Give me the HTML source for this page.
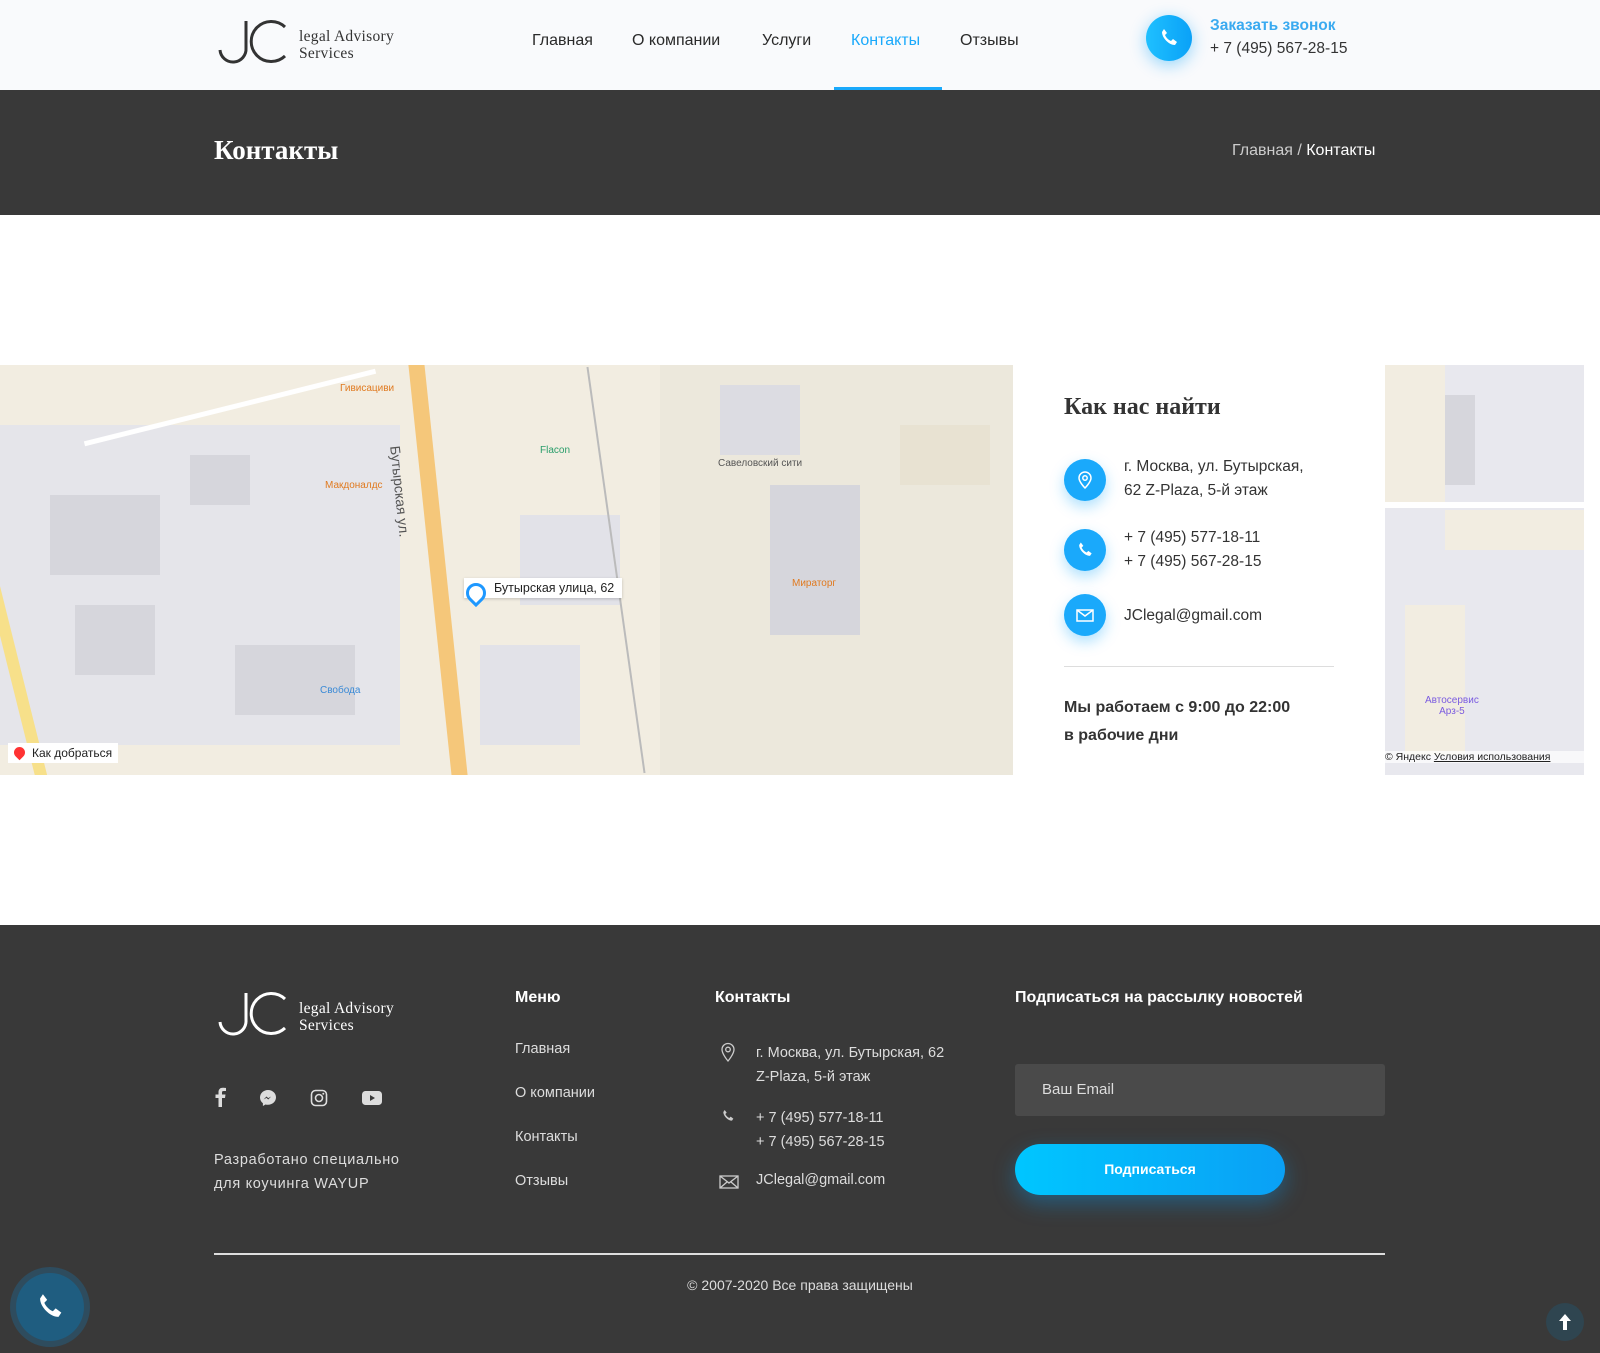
<!DOCTYPE html>
<html><head><meta charset="utf-8">
<style>
*{margin:0;padding:0;box-sizing:border-box}
body{width:1600px;height:1353px;position:relative;overflow:hidden;background:#fff;font-family:"Liberation Sans",sans-serif;color:#333}
.abs{position:absolute}
header{position:absolute;left:0;top:0;width:1600px;height:90px;background:#f9fafc}
.logo{position:absolute;width:220px;height:50px}
.logo svg{position:absolute;left:0;top:0}
.logo .t{position:absolute;left:83px;top:10px;font-family:"Liberation Serif",serif;font-size:15.5px;line-height:17px;letter-spacing:.3px;white-space:nowrap}
nav a{position:absolute;top:32px;font-size:16px;color:#2a2a2a;text-decoration:none}
.band{position:absolute;left:0;top:90px;width:1600px;height:125px;background:#393939}
.map{position:absolute;background:#f2ede1;overflow:hidden}
.map div{position:absolute}
.ic{position:absolute;width:42px;height:42px;border-radius:50%;background:#1aa9fb;box-shadow:0 6px 14px rgba(26,169,251,.35)}
.ic svg{position:absolute;left:11px;top:11px}
.info{position:absolute;font-size:15.5px;line-height:24px;color:#333;white-space:nowrap}
footer{position:absolute;left:0;top:925px;width:1600px;height:428px;background:#393939;color:#ddd}
footer .h{position:absolute;top:64px;font-size:16px;font-weight:bold;color:#fff}
footer .m{position:absolute;font-size:14.5px;color:#ddd;white-space:nowrap}
footer svg.s{position:absolute}
</style></head><body>
<header>
 <div class="logo" style="left:216px;top:18px;color:#333">
  <svg width="72" height="46" viewBox="0 0 72 46"><path d="M30 3V30A13 13 0 0 1 4 32" fill="none" stroke="#333" stroke-width="3"/><path d="M69 9A20 20 0 1 0 69 38" fill="none" stroke="#333" stroke-width="3"/></svg>
  <div class="t">legal Advisory<br>Services</div>
 </div>
 <nav>
  <a style="left:532px">Главная</a>
  <a style="left:632px">О компании</a>
  <a style="left:762px">Услуги</a>
  <a style="left:851px;color:#1aa9fb">Контакты</a>
  <a style="left:960px">Отзывы</a>
 </nav>
 <div class="abs" style="left:834px;top:87px;width:108px;height:3px;background:#1aa9fb"></div>
 <div class="ic" style="left:1146px;top:15px;width:46px;height:46px;background:linear-gradient(90deg,#1fc0ff,#0aa1f7);box-shadow:0 4px 16px rgba(26,169,251,.45)"><svg width="24" height="24" viewBox="0 0 24 24"><path d="M7 3l3 4-2 2c1 2.5 3.5 5 6 6l2-2 4 3-2 3c-6 0-13-7-13-13z" fill="#fff"/></svg></div>
 <div class="abs" style="left:1210px;top:17px;font-size:15.5px;font-weight:bold;color:#3aaaf0">Заказать звонок</div>
 <div class="abs" style="left:1210px;top:40px;font-size:15.5px;color:#333">+ 7 (495) 567-28-15</div>
</header>
<div class="band">
 <div class="abs" style="left:214px;top:45px;font-family:'Liberation Serif',serif;font-size:27px;font-weight:bold;color:#fff">Контакты</div>
 <div class="abs" style="left:1232px;top:52px;font-size:16px;color:#ccc">Главная / <span style="color:#fff">Контакты</span></div>
</div>

<div class="map" style="left:0;top:365px;width:1013px;height:410px">
 <div style="left:0;top:60px;width:400px;height:320px;background:#e5e5ea"></div>
 <div style="left:50px;top:130px;width:110px;height:80px;background:#d6d6dc"></div>
 <div style="left:75px;top:240px;width:80px;height:70px;background:#d6d6dc"></div>
 <div style="left:190px;top:90px;width:60px;height:50px;background:#d6d6dc"></div>
 <div style="left:235px;top:280px;width:120px;height:70px;background:#d6d6dc"></div>
 <div style="left:520px;top:150px;width:100px;height:90px;background:#e2e2e8"></div>
 <div style="left:480px;top:280px;width:100px;height:100px;background:#e2e2e8"></div>
 <div style="left:660px;top:0;width:353px;height:410px;background:#ece8dc"></div>
 <div style="left:720px;top:20px;width:80px;height:70px;background:#dcdce2"></div>
 <div style="left:770px;top:120px;width:90px;height:150px;background:#d6d6dc"></div>
 <div style="left:900px;top:60px;width:90px;height:60px;background:#e8e2d2"></div>
 <div style="left:430px;top:-20px;width:16px;height:450px;background:#f5c77a;transform:rotate(-6deg)"></div>
 <div style="left:0;top:120px;width:12px;height:300px;background:#f7e08a;transform:rotate(-14deg)"></div>
 <div style="left:80px;top:40px;width:300px;height:5px;background:#fff;transform:rotate(-14deg)"></div>
 <div style="left:615px;top:0;width:2px;height:410px;background:#bbb;transform:rotate(-8deg)"></div>
 <div style="left:464px;top:213px;background:#fff;padding:3px 8px 3px 30px;font-size:12.5px;color:#222;box-shadow:0 1px 3px rgba(0,0,0,.2)">Бутырская улица, 62</div>
 <div style="left:466px;top:218px;width:20px;height:20px;border:3px solid #1e98ff;border-radius:50% 50% 50% 0;transform:rotate(-45deg);background:#fff"></div>
 <div style="left:8px;top:378px;background:#fff;padding:3px 6px 3px 24px;font-size:12px;color:#222">Как добраться</div>
 <div style="left:14px;top:382px;width:11px;height:11px;background:#f33;border-radius:50% 50% 50% 0;transform:rotate(-45deg)"></div>
 <div style="left:403px;top:80px;font-size:14px;color:#555;transform:rotate(84deg);transform-origin:left top">Бутырская ул.</div>
 <div style="left:325px;top:115px;font-size:10px;color:#e07a20">Макдоналдс</div>
 <div style="left:340px;top:18px;font-size:10px;color:#e07a20">Гивисациви</div>
 <div style="left:540px;top:80px;font-size:10px;color:#2a9d6a">Flacon</div>
 <div style="left:718px;top:93px;font-size:10px;color:#555">Савеловский сити</div>
 <div style="left:792px;top:213px;font-size:10px;color:#e07a20">Мираторг</div>
 <div style="left:320px;top:320px;font-size:10px;color:#3a8ad6">Свобода</div>
</div>

<div class="info" style="left:1064px;top:395px;font-family:'Liberation Serif',serif;font-size:24px;font-weight:bold;color:#333">Как нас найти</div>
<div class="ic" style="left:1064px;top:459px"><svg width="20" height="20" viewBox="0 0 20 20"><path d="M10 18s-6-6-6-10a6 6 0 0112 0c0 4-6 10-6 10z" fill="none" stroke="#fff" stroke-width="1.5"/><circle cx="10" cy="8" r="2.2" fill="none" stroke="#fff" stroke-width="1.5"/></svg></div>
<div class="info" style="left:1124px;top:455px">г. Москва, ул. Бутырская,<br>62 Z-Plaza, 5-й этаж</div>
<div class="ic" style="left:1064px;top:529px"><svg width="20" height="20" viewBox="0 0 24 24"><path d="M7 3l3 4-2 2c1 2.5 3.5 5 6 6l2-2 4 3-2 3c-6 0-13-7-13-13z" fill="#fff"/></svg></div>
<div class="info" style="left:1124px;top:526px">+ 7 (495) 577-18-11<br>+ 7 (495) 567-28-15</div>
<div class="ic" style="left:1064px;top:594px"><svg width="20" height="20" viewBox="0 0 20 20"><rect x="2" y="5" width="16" height="11" fill="none" stroke="#fff" stroke-width="1.5"/><path d="M2 5l8 6 8-6" fill="none" stroke="#fff" stroke-width="1.5"/></svg></div>
<div class="info" style="left:1124px;top:604px">JClegal@gmail.com</div>
<div class="abs" style="left:1064px;top:666px;width:270px;height:1px;background:#ddd"></div>
<div class="info" style="left:1064px;top:694px;font-weight:bold;font-size:16px;line-height:28px;color:#333">Мы работаем с 9:00 до 22:00<br>в рабочие дни</div>

<div class="map" style="left:1385px;top:365px;width:199px;height:410px;background:#e8e8ee">
 <div style="left:0;top:0;width:60px;height:140px;background:#f2ede1"></div>
 <div style="left:60px;top:145px;width:139px;height:40px;background:#f2ede1"></div>
 <div style="left:0;top:137px;width:199px;height:6px;background:#fff"></div>
 <div style="left:20px;top:240px;width:60px;height:150px;background:#f2ede1"></div>
 <div style="left:60px;top:30px;width:30px;height:90px;background:#d6d6dc"></div>
 <div style="left:40px;top:330px;font-size:10px;color:#7a5be0;text-align:center;line-height:11px">Автосервис<br>Арз-5</div>
 <div style="left:0;top:386px;width:199px;font-size:10.5px;color:#222;background:rgba(255,255,255,.7);white-space:nowrap">© Яндекс <u>Условия использования</u></div>
</div>

<footer>
 <div class="logo" style="left:216px;top:65px;color:#fff">
  <svg width="72" height="46" viewBox="0 0 72 46"><path d="M30 3V30A13 13 0 0 1 4 32" fill="none" stroke="#fff" stroke-width="3"/><path d="M69 9A20 20 0 1 0 69 38" fill="none" stroke="#fff" stroke-width="3"/></svg>
  <div class="t">legal Advisory<br>Services</div>
 </div>
 <svg class="s" style="left:214px;top:162px" width="12" height="20" viewBox="0 0 12 20"><path d="M8 20V11h3l.5-3.5H8V5.5C8 4.5 8.3 4 9.7 4H12V1C11.5 1 10 .8 8.8.8 6 .8 4.5 2.5 4.5 5.2v2.3H1.5V11h3v9z" fill="#ddd"/></svg>
 <svg class="s" style="left:259px;top:164px" width="18" height="18" viewBox="0 0 18 18"><path d="M9 1C4.6 1 1 4.3 1 8.5c0 2.3 1.1 4.4 2.9 5.8V17l2.6-1.5c.8.2 1.6.3 2.5.3 4.4 0 8-3.3 8-7.5S13.4 1 9 1z" fill="#ddd"/><path d="M4.5 10.5l3-3 1.7 1.6 3-1.6-3 3-1.7-1.6z" fill="#393939"/></svg>
 <svg class="s" style="left:310px;top:164px" width="18" height="18" viewBox="0 0 18 18"><rect x="1.5" y="1.5" width="15" height="15" rx="4" fill="none" stroke="#ddd" stroke-width="1.6"/><circle cx="9" cy="9" r="3.5" fill="none" stroke="#ddd" stroke-width="1.6"/><circle cx="13.3" cy="4.7" r="1" fill="#ddd"/></svg>
 <svg class="s" style="left:362px;top:166px" width="20" height="14" viewBox="0 0 20 14"><rect width="20" height="14" rx="3.5" fill="#ddd"/><path d="M8 4v6l5-3z" fill="#393939"/></svg>
 <div class="m" style="left:214px;top:223px;line-height:24px;letter-spacing:.7px">Разработано специально<br>для коучинга WAYUP</div>
 <div class="h" style="left:515px">Меню</div>
 <div class="m" style="left:515px;top:116px">Главная</div>
 <div class="m" style="left:515px;top:160px">О компании</div>
 <div class="m" style="left:515px;top:204px">Контакты</div>
 <div class="m" style="left:515px;top:248px">Отзывы</div>
 <div class="h" style="left:715px">Контакты</div>
 <svg class="s" style="left:720px;top:116px" width="16" height="22" viewBox="0 0 16 22"><path d="M8 20s-6-7-6-11.5a6 6 0 0112 0C14 13 8 20 8 20z" fill="none" stroke="#ccc" stroke-width="1.3"/><circle cx="8" cy="8.5" r="2.3" fill="none" stroke="#ccc" stroke-width="1.3"/></svg>
 <div class="m" style="left:756px;top:116px;line-height:24px">г. Москва, ул. Бутырская, 62<br>Z-Plaza, 5-й этаж</div>
 <svg class="s" style="left:720px;top:182px" width="16" height="18" viewBox="0 0 24 24"><path d="M7 3l3 4-2 2c1 2.5 3.5 5 6 6l2-2 4 3-2 3c-6 0-13-7-13-13z" fill="#ccc"/></svg>
 <div class="m" style="left:756px;top:181px;line-height:24px">+ 7 (495) 577-18-11<br>+ 7 (495) 567-28-15</div>
 <svg class="s" style="left:719px;top:249px" width="20" height="16" viewBox="0 0 20 16"><rect x="1" y="2" width="18" height="12" fill="none" stroke="#ccc" stroke-width="1.3"/><path d="M1 2l9 7 9-7M1 14l7-6M19 14l-7-6" fill="none" stroke="#ccc" stroke-width="1.3"/></svg>
 <div class="m" style="left:756px;top:247px">JClegal@gmail.com</div>
 <div class="h" style="left:1015px">Подписаться на рассылку новостей</div>
 <div class="abs" style="left:1015px;top:139px;width:370px;height:52px;background:#4a4a4a;border-radius:3px;padding:17px 27px;font-size:15px;color:#ddd">Ваш Email</div>
 <div class="abs" style="left:1015px;top:219px;width:270px;height:51px;border-radius:26px;background:linear-gradient(90deg,#00c6ff,#0aa0f5);box-shadow:0 8px 22px rgba(0,160,255,.35);color:#fff;font-weight:bold;font-size:14px;text-align:center;line-height:51px">Подписаться</div>
 <div class="abs" style="left:214px;top:328px;width:1171px;height:2px;background:#ddd"></div>
 <div class="m" style="left:0;width:1600px;text-align:center;top:352px;font-size:14px">© 2007-2020 Все права защищены</div>
 <div class="abs" style="left:10px;top:342px;width:80px;height:80px;border-radius:50%;background:#2e4c5e"></div>
 <div class="abs" style="left:16px;top:348px;width:68px;height:68px;border-radius:50%;background:#1f5d80"><svg style="position:absolute;left:17px;top:17px" width="34" height="34" viewBox="0 0 24 24"><path d="M7 3l3 4-2 2c1 2.5 3.5 5 6 6l2-2 4 3-2 3c-6 0-13-7-13-13z" fill="#fff"/></svg></div>
 <div class="abs" style="left:1546px;top:378px;width:38px;height:38px;border-radius:50%;background:#2f4550"><svg style="position:absolute;left:11px;top:10px" width="16" height="18" viewBox="0 0 16 18"><path d="M8 1L2 8h4v9h4V8h4z" fill="#fff"/></svg></div>
</footer>
</body></html>
